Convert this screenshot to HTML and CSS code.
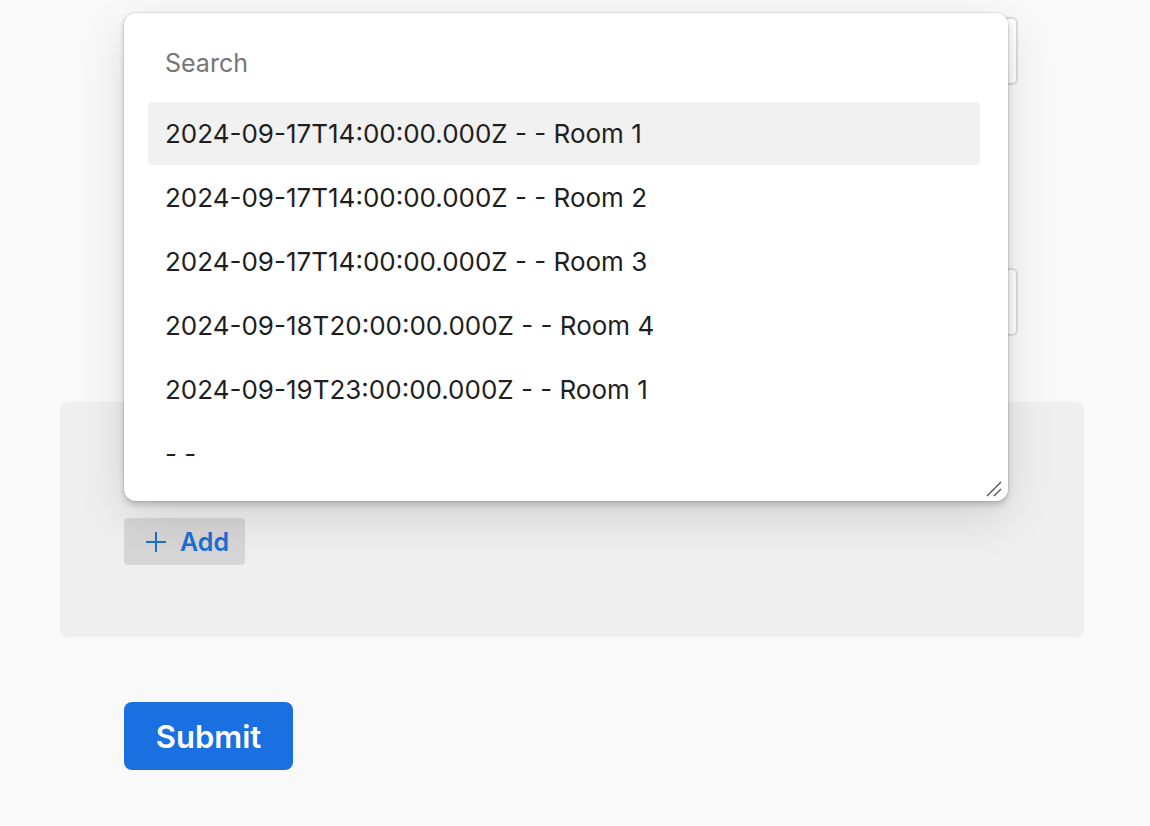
FILE: index.html
```html
<!DOCTYPE html>
<html lang="en">
<head>
    <meta charset="UTF-8">
    <meta name="viewport" content="width=device-width, initial-scale=1.0">
    <title>Booking form</title>
    <link rel="stylesheet" href="styles.css">
</head>
<body>
    <form class="page">
        <div class="field">
            <input class="text-input" type="text">
        </div>
        <div class="field field-second">
            <input class="text-input" type="text">
        </div>

        <div class="panel">
            <button type="button" class="add-btn">
                <svg width="22" height="22" viewBox="0 0 22 22" fill="none" stroke="currentColor" stroke-width="2">
                    <path d="M11 1v20M1 11h20"/>
                </svg>
                Add
            </button>
        </div>

        <button type="submit" class="submit-btn">Submit</button>

        <!-- open combobox popover -->
        <div class="dropdown">
            <div class="search">Search</div>
            <ul class="options">
                <li class="option active">2024-09-17T14:00:00.000Z - - Room 1</li>
                <li class="option">2024-09-17T14:00:00.000Z - - Room 2</li>
                <li class="option">2024-09-17T14:00:00.000Z - - Room 3</li>
                <li class="option">2024-09-18T20:00:00.000Z - - Room 4</li>
                <li class="option">2024-09-19T23:00:00.000Z - - Room 1</li>
                <li class="option">- -</li>
            </ul>
            <svg class="grip" width="16" height="16" viewBox="0 0 16 16" stroke="#555" stroke-width="1.4">
                <path d="M1 15L15 1M8 15L15 8"/>
            </svg>
        </div>
    </form>
</body>
</html>
```

FILE: styles.css
```css
body {
    margin: 0;
    background: #f9f9fa;
    font-family: 'Inter', 'Noto Sans', sans-serif;
    color: #1d1d1f;
}

.page {
    position: relative;
    width: 1024px;
    margin-left: 60px;
    padding-top: 17px;
    padding-bottom: 56px;
}

.field {
    padding: 0 66px 0 64px;
}

.field-second {
    margin-top: 183px;
}

.text-input {
    box-sizing: border-box;
    width: 100%;
    height: 68px;
    border: 2px solid #dcdcdc;
    border-radius: 6px;
    background: #fff;
    font-size: 26px;
}

.panel {
    margin-top: 66px;
    height: 235px;
    box-sizing: border-box;
    padding: 116px 64px 0;
    background: #efefef;
    border-radius: 8px;
}

.add-btn {
    display: flex;
    align-items: center;
    gap: 13px;
    height: 47px;
    padding: 0 16px 0 21px;
    border: none;
    border-radius: 4px;
    background: #d6d6d6;
    color: #1c6ed3;
    font-family: inherit;
    font-size: 25px;
    font-weight: 600;
}

.submit-btn {
    display: block;
    margin: 65px 0 0 64px;
    width: 169px;
    height: 68px;
    border: none;
    border-radius: 8px;
    background: #1a6fe1;
    color: #fff;
    font-family: inherit;
    font-size: 31px;
    font-weight: 600;
}

.dropdown {
    position: absolute;
    top: 13px;
    left: 64px;
    width: 884px;
    height: 488px;
    box-sizing: border-box;
    padding: 24px 28px 0 24px;
    background: #fff;
    border-radius: 12px;
    box-shadow: 0 0 0 1px rgba(0, 0, 0, 0.08), 0 4px 6px rgba(0, 0, 0, 0.18), 0 16px 48px rgba(0, 0, 0, 0.12);
}

.search {
    height: 52px;
    padding: 0 17px;
    line-height: 52px;
    font-size: 25px;
    color: #767676;
    margin-bottom: 13px;
}

.options {
    list-style: none;
    margin: 0;
    padding: 0;
}

.option {
    height: 64px;
    line-height: 64px;
    padding: 0 17px;
    border-radius: 4px;
    font-size: 26px;
    color: #1f1f1f;
}

.option.active {
    height: 63px;
    line-height: 63px;
    margin-bottom: 1px;
    background: #f1f1f1;
}

.grip {
    position: absolute;
    right: 6px;
    bottom: 4px;
}
```
